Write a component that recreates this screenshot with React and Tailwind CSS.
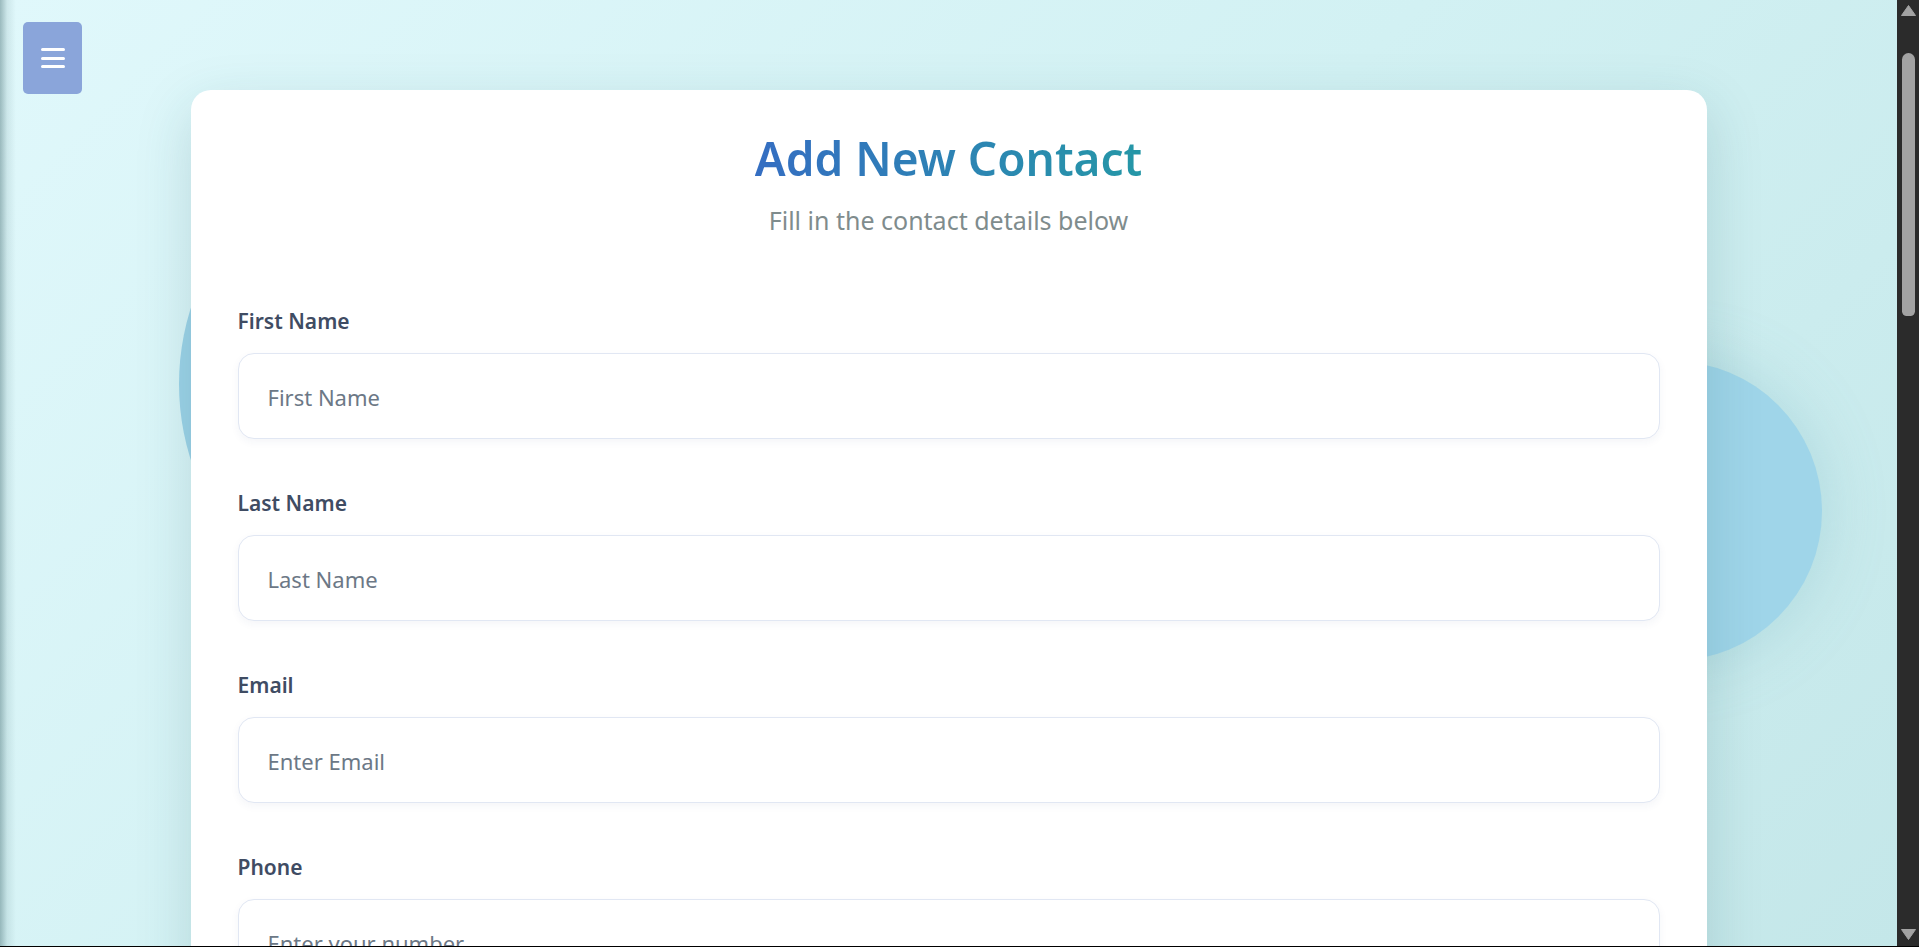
import { useState } from 'react';

const fields = [
  { name: 'firstName', label: 'First Name', placeholder: 'First Name', type: 'text' },
  { name: 'lastName', label: 'Last Name', placeholder: 'Last Name', type: 'text' },
  { name: 'email', label: 'Email', placeholder: 'Enter Email', type: 'email' },
  { name: 'phone', label: 'Phone', placeholder: 'Enter your number', type: 'tel' },
  { name: 'address', label: 'Address', placeholder: 'Enter Address', type: 'text' },
];

function MenuButton() {
  return (
    <button
      type="button"
      aria-label="Open menu"
      className="fixed left-[23px] top-[22px] z-20 flex h-[72px] w-[59px] flex-col items-center justify-center gap-[5.5px] rounded-[5px] bg-[#8aa5da]"
    >
      <span className="block h-[3px] w-[24px] rounded-full bg-white" />
      <span className="block h-[3px] w-[24px] rounded-full bg-white" />
      <span className="block h-[3px] w-[24px] rounded-full bg-white" />
    </button>
  );
}

function Field({ field, value, onChange }) {
  return (
    <div className="mb-[48px] flex flex-col">
      <label
        htmlFor={field.name}
        className="mb-[16px] text-[21px] font-semibold leading-[32px] text-[#3f4c63]"
      >
        {field.label}
      </label>
      <input
        id={field.name}
        type={field.type}
        value={value}
        onChange={(e) => onChange(field.name, e.target.value)}
        placeholder={field.placeholder}
        className="h-[86px] w-full rounded-[16px] border border-[#e1e7f3] bg-white px-[29px] pt-[2px] text-[22px] text-[#2d3748] shadow-[0_3px_8px_rgba(40,60,110,0.05)] outline-none placeholder:text-[#6c7886]"
      />
    </div>
  );
}

function Scrollbar() {
  return (
    <div className="flex w-[22px] shrink-0 flex-col bg-[#2b2b2b]">
      <div className="flex h-[22px] items-start justify-center pt-[5px]">
        <svg width="15" height="11" viewBox="0 0 15 11">
          <path d="M7.5 0.5 L14.5 10.5 L0.5 10.5 Z" fill="#a3a3a3" strokeLinejoin="round" stroke="#a3a3a3" />
        </svg>
      </div>
      <div className="mx-auto mt-[31px] h-[263px] w-[13px] rounded-t-[7px] rounded-b-[5px] bg-[#a3a3a3]" />
      <div className="flex-1" />
      <div className="flex h-[22px] items-start justify-center pt-[5px]">
        <svg width="15" height="11" viewBox="0 0 15 11">
          <path d="M0.5 0.5 L14.5 0.5 L7.5 10.5 Z" fill="#a3a3a3" strokeLinejoin="round" stroke="#a3a3a3" />
        </svg>
      </div>
    </div>
  );
}

export default function App() {
  const [form, setForm] = useState({});

  const handleChange = (name, value) => {
    setForm((prev) => ({ ...prev, [name]: value }));
  };

  return (
    <div
      className="flex h-screen w-full flex-col overflow-hidden bg-[#2b2b2b]"
      style={{ fontFamily: '"Noto Sans", "Open Sans", sans-serif' }}
    >
      <div className="flex min-h-0 flex-1">
        <main className="relative min-w-0 flex-1 overflow-hidden bg-[linear-gradient(135deg,#e0f8fb_0%,#d2f1f3_50%,#c4e7e9_100%)]">
          {/* decorative blobs behind the card */}
          <div className="absolute left-[179px] top-[134px] h-[500px] w-[500px] rounded-full bg-[#9dd3e8]" />
          <div className="absolute left-[1522px] top-[361px] h-[300px] w-[300px] rounded-full bg-[#9fd5e9] shadow-[0_0_60px_rgba(120,180,195,0.35)]" />

          {/* shadow from the off-canvas sidebar */}
          <div className="absolute inset-y-0 left-0 z-10 w-[16px] bg-[linear-gradient(to_right,rgba(70,110,115,0.45),rgba(70,110,115,0.12)_45%,transparent)]" />

          <MenuButton />

          <div className="relative mx-auto mt-[90px] w-[1516px] rounded-[20px] bg-white px-[47px] pb-16 pt-10 shadow-[0_18px_55px_rgba(30,90,100,0.18)]">
            <div className="mb-[67px] flex flex-col items-center">
              <h1 className="inline-block bg-[linear-gradient(to_right,#356ec2,#2597a7)] bg-clip-text text-[46px] font-semibold leading-[56px] text-transparent">
                Add New Contact
              </h1>
              <p className="mt-4 text-[25px] leading-[36px] text-[#7f8c8d]">
                Fill in the contact details below
              </p>
            </div>

            <form onSubmit={(e) => e.preventDefault()}>
              {fields.map((field) => (
                <Field
                  key={field.name}
                  field={field}
                  value={form[field.name] || ''}
                  onChange={handleChange}
                />
              ))}
              <button
                type="submit"
                className="h-[72px] w-full rounded-[16px] bg-[linear-gradient(to_right,#356ec2,#2597a7)] text-[22px] font-semibold text-white"
              >
                Save Contact
              </button>
            </form>
          </div>
        </main>
        <Scrollbar />
      </div>
      <div className="h-px bg-black" />
    </div>
  );
}
